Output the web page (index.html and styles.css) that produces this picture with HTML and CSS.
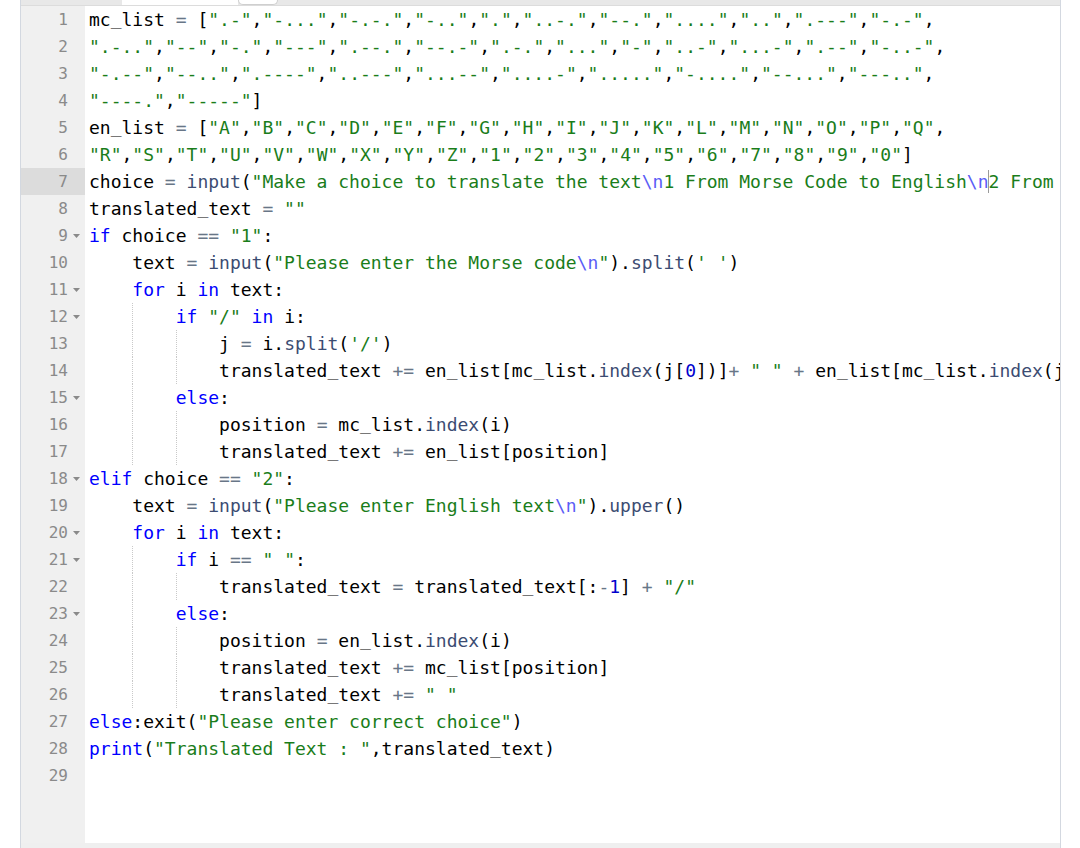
FILE: index.html
```html
<!DOCTYPE html>
<html>
<head>
<meta charset="utf-8">
<title>main.py</title>
<link rel="stylesheet" href="styles.css">
</head>
<body>
<div class="frame">
  <div class="editor">
    <div class="topbar">
      <span class="tb-gap"></span>
      <span class="tb-white"></span>
      <span class="tb-tab"></span>
    </div>
    <div class="main">
      <div class="gutter">
        <div class="gl"><span class="num">1</span><span class="fold"></span></div>
        <div class="gl"><span class="num">2</span><span class="fold"></span></div>
        <div class="gl"><span class="num">3</span><span class="fold"></span></div>
        <div class="gl"><span class="num">4</span><span class="fold"></span></div>
        <div class="gl"><span class="num">5</span><span class="fold"></span></div>
        <div class="gl"><span class="num">6</span><span class="fold"></span></div>
        <div class="gl active"><span class="num">7</span><span class="fold"></span></div>
        <div class="gl"><span class="num">8</span><span class="fold"></span></div>
        <div class="gl"><span class="num">9</span><span class="fold"><svg width="7" height="4" viewBox="0 0 7 4"><path d="M0 0H7L3.5 4Z"/></svg></span></div>
        <div class="gl"><span class="num">10</span><span class="fold"></span></div>
        <div class="gl"><span class="num">11</span><span class="fold"><svg width="7" height="4" viewBox="0 0 7 4"><path d="M0 0H7L3.5 4Z"/></svg></span></div>
        <div class="gl"><span class="num">12</span><span class="fold"><svg width="7" height="4" viewBox="0 0 7 4"><path d="M0 0H7L3.5 4Z"/></svg></span></div>
        <div class="gl"><span class="num">13</span><span class="fold"></span></div>
        <div class="gl"><span class="num">14</span><span class="fold"></span></div>
        <div class="gl"><span class="num">15</span><span class="fold"><svg width="7" height="4" viewBox="0 0 7 4"><path d="M0 0H7L3.5 4Z"/></svg></span></div>
        <div class="gl"><span class="num">16</span><span class="fold"></span></div>
        <div class="gl"><span class="num">17</span><span class="fold"></span></div>
        <div class="gl"><span class="num">18</span><span class="fold"><svg width="7" height="4" viewBox="0 0 7 4"><path d="M0 0H7L3.5 4Z"/></svg></span></div>
        <div class="gl"><span class="num">19</span><span class="fold"></span></div>
        <div class="gl"><span class="num">20</span><span class="fold"><svg width="7" height="4" viewBox="0 0 7 4"><path d="M0 0H7L3.5 4Z"/></svg></span></div>
        <div class="gl"><span class="num">21</span><span class="fold"><svg width="7" height="4" viewBox="0 0 7 4"><path d="M0 0H7L3.5 4Z"/></svg></span></div>
        <div class="gl"><span class="num">22</span><span class="fold"></span></div>
        <div class="gl"><span class="num">23</span><span class="fold"><svg width="7" height="4" viewBox="0 0 7 4"><path d="M0 0H7L3.5 4Z"/></svg></span></div>
        <div class="gl"><span class="num">24</span><span class="fold"></span></div>
        <div class="gl"><span class="num">25</span><span class="fold"></span></div>
        <div class="gl"><span class="num">26</span><span class="fold"></span></div>
        <div class="gl"><span class="num">27</span><span class="fold"></span></div>
        <div class="gl"><span class="num">28</span><span class="fold"></span></div>
        <div class="gl"><span class="num">29</span><span class="fold"></span></div>
      </div>
      <div class="code">
<div class="ln">mc<span class="us">_</span>list <span class="o">=</span> [<span class="s">".-"</span>,<span class="s">"-..."</span>,<span class="s">"-.-."</span>,<span class="s">"-.."</span>,<span class="s">"."</span>,<span class="s">"..-."</span>,<span class="s">"--."</span>,<span class="s">"...."</span>,<span class="s">".."</span>,<span class="s">".---"</span>,<span class="s">"-.-"</span>,</div>
<div class="ln"><span class="s">".-.."</span>,<span class="s">"--"</span>,<span class="s">"-."</span>,<span class="s">"---"</span>,<span class="s">".--."</span>,<span class="s">"--.-"</span>,<span class="s">".-."</span>,<span class="s">"..."</span>,<span class="s">"-"</span>,<span class="s">"..-"</span>,<span class="s">"...-"</span>,<span class="s">".--"</span>,<span class="s">"-..-"</span>,</div>
<div class="ln"><span class="s">"-.--"</span>,<span class="s">"--.."</span>,<span class="s">".----"</span>,<span class="s">"..---"</span>,<span class="s">"...--"</span>,<span class="s">"....-"</span>,<span class="s">"....."</span>,<span class="s">"-...."</span>,<span class="s">"--..."</span>,<span class="s">"---.."</span>,</div>
<div class="ln"><span class="s">"----."</span>,<span class="s">"-----"</span>]</div>
<div class="ln">en<span class="us">_</span>list <span class="o">=</span> [<span class="s">"A"</span>,<span class="s">"B"</span>,<span class="s">"C"</span>,<span class="s">"D"</span>,<span class="s">"E"</span>,<span class="s">"F"</span>,<span class="s">"G"</span>,<span class="s">"H"</span>,<span class="s">"I"</span>,<span class="s">"J"</span>,<span class="s">"K"</span>,<span class="s">"L"</span>,<span class="s">"M"</span>,<span class="s">"N"</span>,<span class="s">"O"</span>,<span class="s">"P"</span>,<span class="s">"Q"</span>,</div>
<div class="ln"><span class="s">"R"</span>,<span class="s">"S"</span>,<span class="s">"T"</span>,<span class="s">"U"</span>,<span class="s">"V"</span>,<span class="s">"W"</span>,<span class="s">"X"</span>,<span class="s">"Y"</span>,<span class="s">"Z"</span>,<span class="s">"1"</span>,<span class="s">"2"</span>,<span class="s">"3"</span>,<span class="s">"4"</span>,<span class="s">"5"</span>,<span class="s">"6"</span>,<span class="s">"7"</span>,<span class="s">"8"</span>,<span class="s">"9"</span>,<span class="s">"0"</span>]</div>
<div class="ln">choice <span class="o">=</span> <span class="f">input</span>(<span class="s">"Make a choice to translate the text<span class="e">\n</span>1 From Morse Code to English<span class="e">\n</span><span class="cur"></span>2 From</span></div>
<div class="ln">translated<span class="us">_</span>text <span class="o">=</span> <span class="s">""</span></div>
<div class="ln"><span class="k">if</span> choice <span class="o">==</span> <span class="s">"1"</span>:</div>
<div class="ln"><span class="ig">    </span>text <span class="o">=</span> <span class="f">input</span>(<span class="s">"Please enter the Morse code<span class="e">\n</span>"</span>).<span class="f">split</span>(<span class="s">' '</span>)</div>
<div class="ln"><span class="ig">    </span><span class="k">for</span> i <span class="k">in</span> text:</div>
<div class="ln"><span class="ig">    </span><span class="ig g">    </span><span class="k">if</span> <span class="s">"/"</span> <span class="k">in</span> i:</div>
<div class="ln"><span class="ig">    </span><span class="ig g">    </span><span class="ig g">    </span>j <span class="o">=</span> i.<span class="f">split</span>(<span class="s">'/'</span>)</div>
<div class="ln"><span class="ig">    </span><span class="ig g">    </span><span class="ig g">    </span>translated<span class="us">_</span>text <span class="o">+=</span> en<span class="us">_</span>list[mc<span class="us">_</span>list.<span class="f">index</span>(j[<span class="n">0</span>])]<span class="o">+</span> <span class="s">" "</span> <span class="o">+</span> en<span class="us">_</span>list[mc<span class="us">_</span>list.<span class="f">index</span>(j</div>
<div class="ln"><span class="ig">    </span><span class="ig g">    </span><span class="k">else</span>:</div>
<div class="ln"><span class="ig">    </span><span class="ig g">    </span><span class="ig g">    </span>position <span class="o">=</span> mc<span class="us">_</span>list.<span class="f">index</span>(i)</div>
<div class="ln"><span class="ig">    </span><span class="ig g">    </span><span class="ig g">    </span>translated<span class="us">_</span>text <span class="o">+=</span> en<span class="us">_</span>list[position]</div>
<div class="ln"><span class="k">elif</span> choice <span class="o">==</span> <span class="s">"2"</span>:</div>
<div class="ln"><span class="ig">    </span>text <span class="o">=</span> <span class="f">input</span>(<span class="s">"Please enter English text<span class="e">\n</span>"</span>).<span class="f">upper</span>()</div>
<div class="ln"><span class="ig">    </span><span class="k">for</span> i <span class="k">in</span> text:</div>
<div class="ln"><span class="ig">    </span><span class="ig g">    </span><span class="k">if</span> i <span class="o">==</span> <span class="s">" "</span>:</div>
<div class="ln"><span class="ig">    </span><span class="ig g">    </span><span class="ig g">    </span>translated<span class="us">_</span>text <span class="o">=</span> translated<span class="us">_</span>text[:<span class="o">-</span><span class="n">1</span>] <span class="o">+</span> <span class="s">"/"</span></div>
<div class="ln"><span class="ig">    </span><span class="ig g">    </span><span class="k">else</span>:</div>
<div class="ln"><span class="ig">    </span><span class="ig g">    </span><span class="ig g">    </span>position <span class="o">=</span> en<span class="us">_</span>list.<span class="f">index</span>(i)</div>
<div class="ln"><span class="ig">    </span><span class="ig g">    </span><span class="ig g">    </span>translated<span class="us">_</span>text <span class="o">+=</span> mc<span class="us">_</span>list[position]</div>
<div class="ln"><span class="ig">    </span><span class="ig g">    </span><span class="ig g">    </span>translated<span class="us">_</span>text <span class="o">+=</span> <span class="s">" "</span></div>
<div class="ln"><span class="k">else</span>:exit(<span class="s">"Please enter correct choice"</span>)</div>
<div class="ln"><span class="k">print</span>(<span class="s">"Translated Text : "</span>,translated<span class="us">_</span>text)</div>
<div class="ln"></div>
      </div>
    </div>
    <div class="bottombar"></div>
  </div>
</div>
</body>
</html>
```
FILE: styles.css
```css
html, body {
  margin: 0;
  padding: 0;
  background: #ffffff;
}

.frame {
  display: flex;
  padding-left: 20px;
  height: 848px;
  overflow: hidden;
}

.editor {
  width: 1039px;
  display: flex;
  flex-direction: column;
  border-left: 1px solid #d3d8e0;
  border-right: 1px solid #d3d8e0;
}

.topbar {
  height: 5px;
  flex: none;
  display: flex;
  background: #e8e8e8;
  border-bottom: 1px solid #dcdcdc;
}

.tb-gap {
  width: 101px;
}

.tb-white {
  width: 116px;
  background: #ffffff;
}

.tb-tab {
  width: 38px;
  background: #ffffff;
  border: 1px solid #cfcfcf;
  border-top: none;
  border-radius: 0 0 6px 6px;
}

.main {
  flex: 1;
  display: flex;
  min-height: 0;
}

.gutter {
  width: 64px;
  flex: none;
  background: #f0f0f0;
  font-family: "DejaVu Sans Mono", monospace;
  font-size: 16px;
  line-height: 27px;
  color: #8a8a8a;
}

.gl {
  height: 27px;
  display: flex;
  justify-content: flex-end;
  align-items: center;
  padding-right: 4px;
}

.gl.active {
  background: #dcdcdc;
}

.fold {
  width: 13px;
  display: flex;
  justify-content: center;
  align-items: center;
}

.fold svg {
  fill: #8a8a8a;
  margin-left: 3px;
}

.code {
  flex: 1;
  min-width: 0;
  overflow: hidden;
  padding-left: 4px;
  background: #ffffff;
  font-family: "DejaVu Sans Mono", monospace;
  font-size: 18px;
  line-height: 27px;
  color: #000000;
}

.ln {
  height: 27px;
  white-space: pre;
}

.us {
  position: relative;
  top: -1px;
}

.ig {
  display: inline-block;
  height: 27px;
  vertical-align: top;
}

.ig.g {
  background-image: linear-gradient(to bottom, #c9c9c9 50%, transparent 50%);
  background-size: 1px 2px;
  background-repeat: repeat-y;
  background-position: left top;
}

.k { color: #0000ff; }
.s { color: #1a7d1a; }
.f { color: #3c4c72; }
.o { color: #687687; }
.n { color: #0000cd; }
.e { color: #5a5cf6; }

.cur {
  display: inline-block;
  width: 0;
  height: 27px;
  vertical-align: top;
  position: relative;
}

.cur::after {
  content: "";
  position: absolute;
  left: -1px;
  top: 2px;
  height: 23px;
  border-left: 1px solid #9a9a9a;
}

.bottombar {
  height: 5px;
  flex: none;
  background: #efefef;
}
```
